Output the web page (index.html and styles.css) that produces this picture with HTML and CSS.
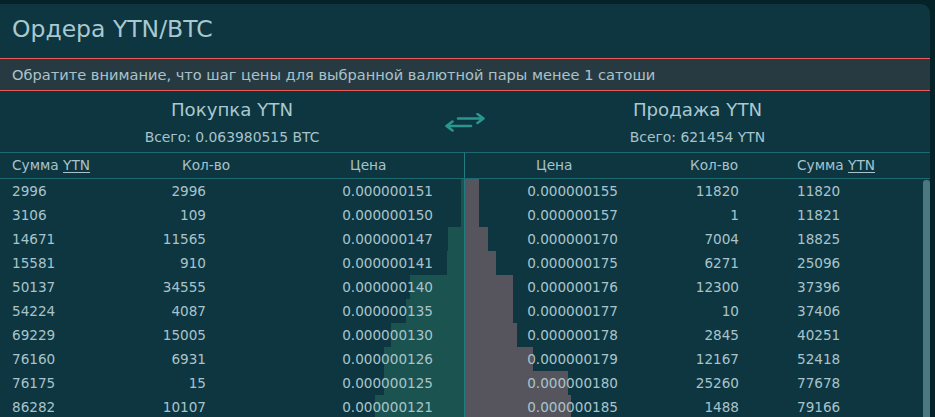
FILE: index.html
```html
<!DOCTYPE html>
<html lang="ru">
<head>
<meta charset="utf-8">
<title>Ордера YTN/BTC</title>
<link rel="stylesheet" href="styles.css">
</head>
<body>
<div class="panel">
  <h1 class="title">Ордера YTN/BTC</h1>
  <div class="notice">Обратите внимание, что шаг цены для выбранной валютной пары менее 1 сатоши</div>
  <div class="sides">
    <div class="side">
      <div class="side-name">Покупка YTN</div>
      <div class="side-total">Всего: 0.063980515 BTC</div>
    </div>
    <div class="swap">
      <svg width="40" height="22" viewBox="0 0 40 22" fill="none" stroke="#2a968e" stroke-width="2.6" stroke-linecap="round" stroke-linejoin="round">
        <path d="M13 5.5H38.5M32.5 1L38.5 5.5L32.5 10"/>
        <path d="M26 13H1.5M7.5 8.5L1.5 13L7.5 17.5"/>
      </svg>
    </div>
    <div class="side">
      <div class="side-name">Продажа YTN</div>
      <div class="side-total">Всего: 621454 YTN</div>
    </div>
  </div>
  <div class="cols">
    <div class="cols-buy">
      <span>Сумма <u>YTN</u></span><span>Кол-во</span><span>Цена</span>
    </div>
    <div class="divider"></div>
    <div class="cols-sell">
      <span>Цена</span><span>Кол-во</span><span>Сумма <u>YTN</u></span>
    </div>
  </div>
  <div class="book">
    <div class="buy">
      <div class="row" style="--w:3px"><span>2996</span><span>2996</span><span>0.000000151</span></div>
      <div class="row" style="--w:3px"><span>3106</span><span>109</span><span>0.000000150</span></div>
      <div class="row" style="--w:16px"><span>14671</span><span>11565</span><span>0.000000147</span></div>
      <div class="row" style="--w:17px"><span>15581</span><span>910</span><span>0.000000141</span></div>
      <div class="row" style="--w:54px"><span>50137</span><span>34555</span><span>0.000000140</span></div>
      <div class="row" style="--w:58px"><span>54224</span><span>4087</span><span>0.000000135</span></div>
      <div class="row" style="--w:73px"><span>69229</span><span>15005</span><span>0.000000130</span></div>
      <div class="row" style="--w:80px"><span>76160</span><span>6931</span><span>0.000000126</span></div>
      <div class="row" style="--w:80px"><span>76175</span><span>15</span><span>0.000000125</span></div>
      <div class="row" style="--w:89px"><span>86282</span><span>10107</span><span>0.000000121</span></div>
    </div>
    <div class="divider"></div>
    <div class="sell">
      <div class="row" style="--w:14px"><span>0.000000155</span><span>11820</span><span>11820</span></div>
      <div class="row" style="--w:14px"><span>0.000000157</span><span>1</span><span>11821</span></div>
      <div class="row" style="--w:23px"><span>0.000000170</span><span>7004</span><span>18825</span></div>
      <div class="row" style="--w:31px"><span>0.000000175</span><span>6271</span><span>25096</span></div>
      <div class="row" style="--w:48px"><span>0.000000176</span><span>12300</span><span>37396</span></div>
      <div class="row" style="--w:48px"><span>0.000000177</span><span>10</span><span>37406</span></div>
      <div class="row" style="--w:52px"><span>0.000000178</span><span>2845</span><span>40251</span></div>
      <div class="row" style="--w:68px"><span>0.000000179</span><span>12167</span><span>52418</span></div>
      <div class="row" style="--w:103px"><span>0.000000180</span><span>25260</span><span>77678</span></div>
      <div class="row" style="--w:106px"><span>0.000000185</span><span>1488</span><span>79166</span></div>
    </div>
    <div class="scrollbar"><div class="thumb"></div></div>
  </div>
</div>
</body>
</html>
```
FILE: styles.css
```css
html, body {
  margin: 0;
  padding: 0;
  height: 100%;
  overflow: hidden;
}
body {
  background: #062229;
  font-family: "DejaVu Sans", Verdana, sans-serif;
  color: #a8c3cb;
  padding-top: 4px;
  box-sizing: border-box;
}
.panel {
  width: 930px;
  height: 413px;
  background: #0d3640;
  border-top-right-radius: 9px;
  overflow: hidden;
}
.title {
  margin: 0;
  height: 54px;
  line-height: 50px;
  padding-left: 12px;
  font-size: 23.5px;
  font-weight: normal;
  color: #a9c8d0;
}
.notice {
  height: 31px;
  line-height: 31px;
  border-top: 1px solid #ee5a55;
  border-bottom: 1px solid #ee5a55;
  background: #283a41;
  padding-left: 12px;
  font-size: 14.6px;
}
.sides {
  display: grid;
  grid-template-columns: 464px 1px 1fr;
  height: 62px;
  border-bottom: 1px solid #1c6a70;
  box-sizing: border-box;
}
.side {
  text-align: center;
  padding-top: 7px;
}
.side-name {
  font-size: 18.2px;
  line-height: 24px;
  color: #a9c8d0;
}
.side-total {
  margin-top: 5px;
  font-size: 13.9px;
  line-height: 20px;
}
.swap {
  display: flex;
  justify-content: center;
  padding-top: 22px;
}
.swap svg {
  flex: none;
}
.cols {
  display: grid;
  grid-template-columns: 464px 1px 1fr;
  height: 26px;
  border-bottom: 1px solid #1c6a70;
  box-sizing: border-box;
  font-size: 13.7px;
  line-height: 25px;
}
.cols-buy {
  display: grid;
  grid-template-columns: 170px 168px 1fr;
  padding-left: 12px;
}
.cols-sell {
  display: grid;
  grid-template-columns: 154px 107px 1fr;
  padding-left: 71px;
}
.cols u {
  text-decoration-thickness: 1px;
  text-underline-offset: 2px;
}
.divider {
  background: #1d7d80;
}
.book {
  display: grid;
  grid-template-columns: 464px 1px 458px 7px;
  font-size: 13.6px;
}
.row {
  height: 24px;
  line-height: 24px;
  display: grid;
}
.buy .row {
  grid-template-columns: 100px 94px 227px 1fr;
  padding-left: 12px;
  background: linear-gradient(to left, #1a534f var(--w), transparent var(--w));
}
.buy .row span:nth-child(2),
.buy .row span:nth-child(3) {
  text-align: right;
}
.sell .row {
  grid-template-columns: 153px 121px 58px 1fr;
  background: linear-gradient(to right, #56555d var(--w), transparent var(--w));
}
.sell .row span:nth-child(1),
.sell .row span:nth-child(2) {
  text-align: right;
}
.sell .row span:nth-child(3) {
  grid-column: 4;
}
.scrollbar {
  padding-top: 1px;
}
.thumb {
  height: 260px;
  background: #4b7780;
  border-radius: 3px 3px 0 0;
}
```
